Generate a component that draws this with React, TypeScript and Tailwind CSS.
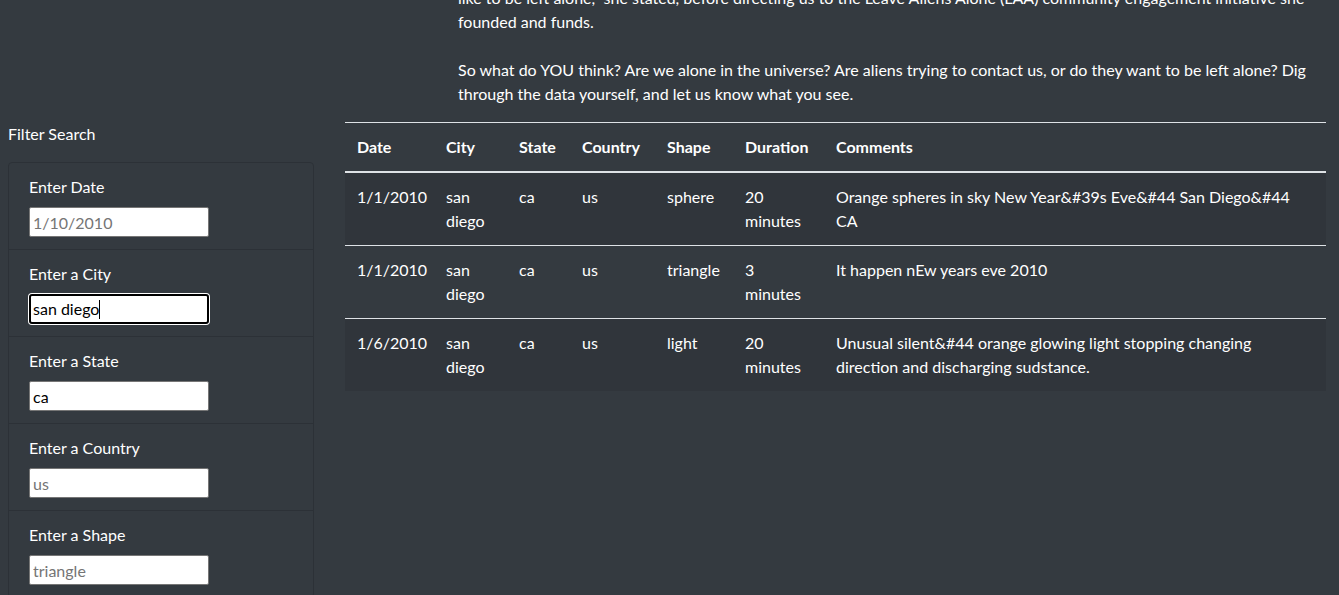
const sightings = [
  {
    date: '1/1/2010',
    city: 'san diego',
    state: 'ca',
    country: 'us',
    shape: 'sphere',
    duration: '20 minutes',
    comments: 'Orange spheres in sky New Year&#39s Eve&#44 San Diego&#44 CA',
  },
  {
    date: '1/1/2010',
    city: 'san diego',
    state: 'ca',
    country: 'us',
    shape: 'triangle',
    duration: '3 minutes',
    comments: 'It happen nEw years eve 2010',
  },
  {
    date: '1/6/2010',
    city: 'san diego',
    state: 'ca',
    country: 'us',
    shape: 'light',
    duration: '20 minutes',
    comments: 'Unusual silent&#44 orange glowing light stopping changing direction and discharging sudstance.',
  },
]

const filters = [
  { label: 'Enter Date', placeholder: '1/10/2010' },
  { label: 'Enter a City', value: 'san diego', focused: true },
  { label: 'Enter a State', value: 'ca' },
  { label: 'Enter a Country', placeholder: 'us' },
  { label: 'Enter a Shape', placeholder: 'triangle' },
]

const headers = [
  { name: 'Date', w: 'w-[89px]' },
  { name: 'City', w: 'w-[73px]' },
  { name: 'State', w: 'w-[63px]' },
  { name: 'Country', w: 'w-[85px]' },
  { name: 'Shape', w: 'w-[78px]' },
  { name: 'Duration', w: 'w-[91px]' },
  { name: 'Comments', w: 'w-auto' },
]

function FilterInput({ f }: { f: (typeof filters)[number] }) {
  // the city box has focus in the screenshot: ring + caret
  if (f.focused) {
    return (
      <div className="flex h-[30px] w-[180px] items-center rounded-[3px] border-2 border-black bg-white pl-[2px] text-black shadow-[0_0_0_1px_#ffffff]">
        <span>{f.value}</span>
        <span className="h-[19px] border-l border-black" />
      </div>
    )
  }
  return (
    <input
      type="text"
      readOnly
      defaultValue={f.value}
      placeholder={f.placeholder}
      className="block h-[30px] w-[180px] rounded-[2px] border border-[#767676] bg-white px-[3px] text-black placeholder:text-[#757575]"
    />
  )
}

export default function App() {
  return (
    <div className="min-h-screen overflow-hidden bg-[#343a40] text-base leading-6 text-white" style={{ fontFamily: 'Lato, "Open Sans", sans-serif' }}>
      {/* page is scrolled: first line of the intro sits half above the viewport */}
      <div className="ml-[458px] -mt-[14px] mb-4 w-[870px]">
        <p>
          like to be left alone,&quot; she stated, before directing us to the Leave Aliens Alone (LAA) community engagement initiative she founded and funds.
        </p>
        <p className="mt-6">
          So what do YOU think? Are we alone in the universe? Are aliens trying to contact us, or do they want to be left alone? Dig through the data yourself, and let us know what you see.
        </p>
      </div>

      <div className="flex">
        <div className="w-[322px] shrink-0 px-2">
          <p className="mb-4">Filter Search</p>
          <ul className="rounded-[4px] border border-[#2c3137]">
            {filters.map((f, i) => (
              <li key={f.label} className={`px-5 pt-3 pb-3 ${i > 0 ? 'border-t border-[#2c3137]' : ''}`}>
                <label className="mb-2 block">{f.label}</label>
                <FilterInput f={f} />
              </li>
            ))}
          </ul>
        </div>

        <div className="ml-[23px] w-[981px] shrink-0">
          <table className="w-full table-fixed border-collapse text-left">
            <thead>
              <tr className="border-t border-b-2 border-[#dee2e6]">
                {headers.map((h) => (
                  <th key={h.name} className={`${h.w} p-3 align-bottom font-bold`}>
                    {h.name}
                  </th>
                ))}
              </tr>
            </thead>
            <tbody>
              {sightings.map((s, i) => (
                <tr key={i} className={`${i % 2 === 0 ? 'bg-[#30353b]' : ''} ${i < sightings.length - 1 ? 'border-b border-[#dee2e6]' : ''}`}>
                  <td className="p-3 align-top">{s.date}</td>
                  <td className="p-3 align-top">{s.city}</td>
                  <td className="p-3 align-top">{s.state}</td>
                  <td className="p-3 align-top">{s.country}</td>
                  <td className="p-3 align-top">{s.shape}</td>
                  <td className="p-3 align-top">{s.duration}</td>
                  <td className="p-3 align-top">{s.comments}</td>
                </tr>
              ))}
            </tbody>
          </table>
        </div>
      </div>
    </div>
  )
}
